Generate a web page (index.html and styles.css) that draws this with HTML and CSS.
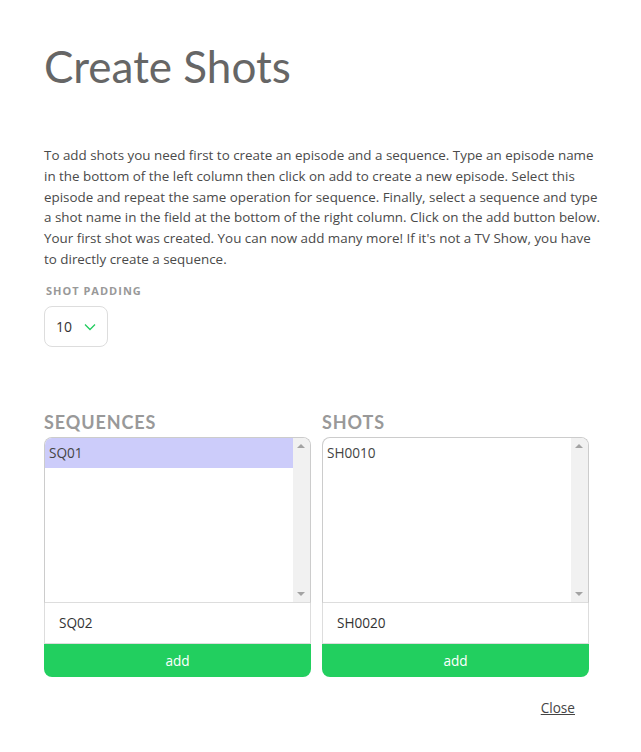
FILE: index.html
```html
<!DOCTYPE html>
<html>
<head>
<meta charset="utf-8">
<link rel="stylesheet" href="styles.css">
</head>
<body>
<div class="modal">
  <h1 class="title">Create Shots</h1>
  <p class="intro">To add shots you need first to create an episode and a sequence. Type an episode name in the bottom of the left column then click on add to create a new episode. Select this episode and repeat the same operation for sequence. Finally, select a sequence and type a shot name in the field at the bottom of the right column. Click on the add button below. Your first shot was created. You can now add many more! If it's not a TV Show, you have to directly create a sequence.</p>
  <div class="field">
    <label class="label">Shot padding</label>
    <div class="select">
      <span>10</span>
      <svg class="chev" width="12" height="8" viewBox="0 0 12 8"><path d="M1 1.5 L6 6.5 L11 1.5" fill="none" stroke="#22cc5f" stroke-width="1.3"/></svg>
    </div>
  </div>
  <div class="columns">
    <div class="column">
      <h2 class="coltitle">Sequences</h2>
      <div class="list">
        <div class="items">
          <div class="item selected">SQ01</div>
        </div>
        <div class="scrollbar">
          <span class="arrow up"></span>
          <span class="arrow down"></span>
        </div>
      </div>
      <div class="input">SQ02</div>
      <button class="add">add</button>
    </div>
    <div class="column">
      <h2 class="coltitle">Shots</h2>
      <div class="list">
        <div class="items">
          <div class="item">SH0010</div>
        </div>
        <div class="scrollbar">
          <span class="arrow up"></span>
          <span class="arrow down"></span>
        </div>
      </div>
      <div class="input">SH0020</div>
      <button class="add">add</button>
    </div>
  </div>
  <div class="footer">
    <a class="close" href="#">Close</a>
  </div>
</div>
</body>
</html>
```
FILE: styles.css
```css
html, body {
  margin: 0;
  padding: 0;
  background: #ffffff;
}
body {
  font-family: "Open Sans", "Noto Sans", sans-serif;
  color: #444;
}
.modal {
  width: 641px;
  height: 752px;
  box-sizing: border-box;
  padding: 40px 44px 0 44px;
  overflow: hidden;
}
.title {
  font-family: Lato, sans-serif;
  font-weight: 400;
  font-size: 44px;
  line-height: 52px;
  color: #666;
  margin: 0;
}
.intro {
  font-size: 13.4px;
  line-height: 20.8px;
  color: #4a4a4a;
  margin: 53px 0 0 0;
  width: 560px;
}
.field {
  margin-top: 13px;
}
.label {
  display: block;
  font-family: "Open Sans", sans-serif;
  font-weight: 700;
  font-size: 11px;
  letter-spacing: 1px;
  text-transform: uppercase;
  color: #999;
  margin-left: 2px;
  line-height: 15px;
}
.select {
  margin-top: 8px;
  width: 64px;
  height: 41px;
  box-sizing: border-box;
  border: 1px solid #ddd;
  border-radius: 8px;
  display: flex;
  align-items: center;
  padding-left: 11px;
  gap: 12px;
  font-size: 14px;
  color: #333;
}
.chev {
  margin-top: 2px;
}
.columns {
  margin-top: 64px;
  display: flex;
  gap: 11px;
}
.column {
  width: 267px;
  display: flex;
  flex-direction: column;
}
.coltitle {
  font-family: Lato, sans-serif;
  font-weight: 700;
  font-size: 18px;
  letter-spacing: 0.9px;
  text-transform: uppercase;
  color: #999;
  margin: 0 0 4px 0;
  line-height: 22px;
}
.list {
  height: 166px;
  box-sizing: border-box;
  border: 1px solid #ccc;
  border-bottom: 1px solid #ddd;
  border-radius: 8px 8px 0 0;
  display: flex;
  overflow: hidden;
}
.items {
  flex: 1;
}
.item {
  height: 30px;
  line-height: 30px;
  padding-left: 4px;
  font-size: 13.6px;
  color: #444;
}
.item.selected {
  background: #ccccfa;
}
.scrollbar {
  width: 17px;
  background: #f1f1f1;
  position: relative;
}
.arrow {
  position: absolute;
  left: 4px;
  width: 0;
  height: 0;
  border-left: 4px solid transparent;
  border-right: 4px solid transparent;
}
.arrow.up {
  top: 6px;
  border-bottom: 4px solid #a3a3a3;
}
.arrow.down {
  bottom: 6px;
  border-top: 4px solid #a3a3a3;
}
.input {
  height: 41px;
  box-sizing: border-box;
  border: 1px solid #ddd;
  border-top: none;
  padding-left: 14px;
  display: flex;
  align-items: center;
  font-size: 13.6px;
  color: #333;
}
.add {
  height: 33px;
  border: none;
  background: #22cf5f;
  color: #fff;
  font-family: "Open Sans", sans-serif;
  font-size: 13.6px;
  border-radius: 0 0 8px 8px;
  padding: 0;
}
.footer {
  display: flex;
  justify-content: flex-end;
  margin-top: 21px;
  padding-right: 22px;
}
.close {
  font-size: 13.6px;
  color: #444;
  text-decoration: underline;
}
```
